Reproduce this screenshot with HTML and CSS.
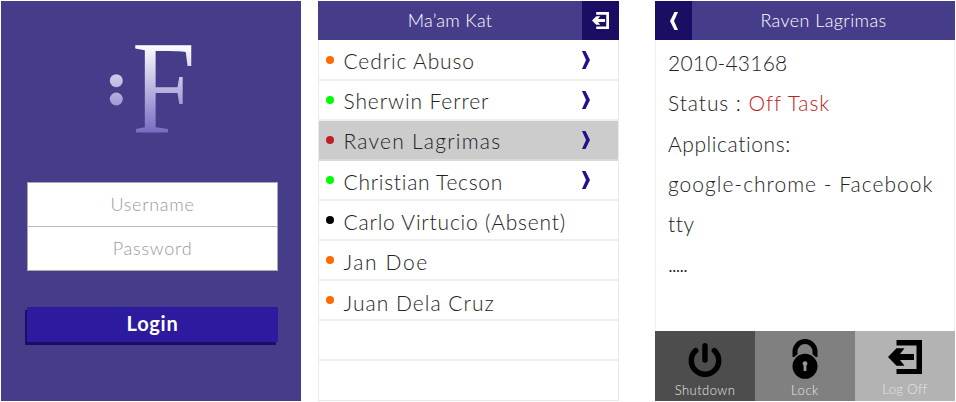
FILE: index.html
```html
<!DOCTYPE html>
<html lang="en">
<head>
<meta charset="utf-8">
<title>Class monitor</title>
<link rel="stylesheet" href="styles.css">
</head>
<body>
<svg class="defs" aria-hidden="true">
  <symbol id="exit" viewBox="0 0 34 34"><path d="M8.500 0H34V34H8.500V29H28.500V5.500H8.500ZM0 17 8.500 8.300H16.500L12 14H26V20H12L16.500 25.700H8.500Z"/></symbol>
  <symbol id="chevron" viewBox="0 0 8 18"><path d="M0 0H3.500L8 9 3.500 18H0L4 9Z"/></symbol>
</svg>

<main class="screens">
  <section class="screen login">
    <svg class="logo" viewBox="0 0 90 96" aria-label="F">
      <defs>
        <linearGradient id="fade" gradientUnits="userSpaceOnUse" x1="0" y1="4" x2="0" y2="94">
          <stop offset="0" stop-color="#fff"/>
          <stop offset="1" stop-color="#7569c0"/>
        </linearGradient>
      </defs>
      <g fill="url(#fade)">
        <circle cx="8.300" cy="40.700" r="6.500"/>
        <circle cx="8.300" cy="59" r="6.500"/>
        <text class="mark" transform="translate(24 0) scale(.85 1)" x="0" y="92.500">F</text>
      </g>
    </svg>
    <form class="form">
      <div class="fields">
        <div class="field user">Username</div>
        <div class="field pass">Password</div>
      </div>
      <div class="submit">Login</div>
    </form>
  </section>

  <section class="screen list">
    <header class="bar">
      <h1 class="title kat">Ma’am Kat</h1>
      <div class="bar-btn"><svg class="exit-small"><use href="#exit"/></svg></div>
    </header>
    <ul class="people">
      <li class="row"><i class="dot orange"></i><span class="name n1">Cedric Abuso</span><svg class="chev"><use href="#chevron"/></svg></li>
      <li class="row"><i class="dot green"></i><span class="name n2">Sherwin Ferrer</span><svg class="chev"><use href="#chevron"/></svg></li>
      <li class="row selected"><i class="dot red"></i><span class="name n3">Raven Lagrimas</span><svg class="chev"><use href="#chevron"/></svg></li>
      <li class="row"><i class="dot green"></i><span class="name n4 low">Christian Tecson</span><svg class="chev"><use href="#chevron"/></svg></li>
      <li class="row"><i class="dot black"></i><span class="name n5 low">Carlo Virtucio (Absent)</span></li>
      <li class="row"><i class="dot orange"></i><span class="name n6 low">Jan Doe</span></li>
      <li class="row"><i class="dot orange"></i><span class="name n7 lower">Juan Dela Cruz</span></li>
      <li class="row"></li>
      <li class="row"></li>
    </ul>
  </section>

  <section class="screen detail">
    <header class="bar">
      <div class="bar-btn"><svg class="chev-back"><use href="#chevron"/></svg></div>
      <h1 class="title raven">Raven Lagrimas</h1>
    </header>
    <div class="info">
      <p class="id">2010-43168</p>
      <p class="status">Status : <span class="off">Off Task</span></p>
      <p class="apps">Applications:</p>
      <p class="chrome">google-chrome - Facebook</p>
      <p class="tty">tty</p>
      <p class="more">.....</p>
    </div>
    <footer class="actions">
      <div class="action shutdown">
        <svg class="icon" viewBox="0 0 40 44"><path d="M10.700 17.500A13.700 13.700 0 1 0 29.300 17.500M20 12.700V27" fill="none" stroke="#000" stroke-width="5.400" stroke-linecap="round"/></svg>
        <span class="label l1">Shutdown</span>
      </div>
      <div class="action lock">
        <svg class="icon" viewBox="0 0 40 44"><path d="M10 24V18.500a10 10 0 0 1 20 0V24" fill="none" stroke="#000" stroke-width="5"/><circle cx="20" cy="33.300" r="13.300" fill="#000" stroke="#808080" stroke-width="1.600"/><path d="M20 28.300a2.300 2.300 0 0 1 1.400 4.200V38H18.600V32.500A2.300 2.300 0 0 1 20 28.300" fill="#999"/></svg>
        <span class="label l2">Lock</span>
      </div>
      <div class="action logoff">
        <svg class="icon" viewBox="0 0 40 44"><use href="#exit" x="3" y="7" width="34" height="34"/></svg>
        <span class="label l3">Log Off</span>
      </div>
    </footer>
  </section>
</main>
</body>
</html>
```
FILE: styles.css
```css
* { box-sizing: border-box; margin: 0; padding: 0; }
body { background: #fff; font-family: Lato, "Open Sans", sans-serif; font-weight: 300; color: #222; overflow: hidden; }
.defs { display: none; }
svg { display: block; }

.screens { display: flex; height: 402px; padding: 1px 0 1px 1px; }
.screen { flex: none; width: 300px; height: 400px; }

/* Login screen */
.login { background: #463d8a; padding: 39px 0 0 26px; }
.logo { width: 90px; height: 96px; margin-left: 81px; overflow: visible; }
.mark { font-family: "Liberation Serif", serif; font-size: 134px; font-weight: 400; }
.form { width: 251px; margin-top: 46px; }
.fields { border: 1px solid #aaa; background: #fff; height: 89px; }
.field { height: 43px; text-align: center; font-size: 18px; line-height: 42px; color: #999; }
.field + .field { height: 44px; border-top: 1px solid #bbb; }
.user { letter-spacing: .7px; }
.pass { letter-spacing: .76px; }
.submit { margin-top: 36px; height: 35px; background: #2c1b9f; box-shadow: -2px 3px 0 #190e63; color: #fff; font-weight: 700; font-size: 20px; line-height: 32px; text-align: center; letter-spacing: .75px; }

/* Header bars */
.bar { height: 39px; display: flex; background: #463d8a; color: #fff; }
.title { flex: 1; text-align: center; font-weight: 300; font-size: 18px; line-height: 38px; }
.kat { letter-spacing: .3px; }
.raven { letter-spacing: .4px; }
.bar-btn { width: 37px; background: #190e63; display: flex; align-items: center; justify-content: center; }
.exit-small { width: 17px; height: 17px; fill: #fff; }
.chev-back { width: 8px; height: 18px; fill: #fff; transform: scaleX(-1); }

/* Roster */
.list { margin-left: 17px; border: 1px solid #e9e9e9; border-top: 0; width: 301px; }
.list .bar { margin: 0 -1px; }
.people { padding-top: 1px; }
.row { display: flex; align-items: center; height: 40px; padding-left: 7px; border-bottom: 2px solid #eee; list-style: none; }
.row.selected { background: #ccc; border-bottom-color: #d9d9d9; }
.row:last-child { border-bottom: 0; height: 39px; }
.dot { width: 8px; height: 8px; border-radius: 50%; margin-right: 9.500px; }
.orange { background: #ff6a00; }
.green { background: #0f0; }
.red { background: #be2026; }
.black { background: #000; }
.name { flex: 1; font-size: 21px; line-height: 38px; padding-top: 1px; white-space: nowrap; }
.low { padding-top: 3px; }
.lower { padding-top: 5px; }
.chev { width: 8px; height: 18px; margin-right: 28px; fill: #22118a; }
.n1 { letter-spacing: .87px; }
.n2 { letter-spacing: .88px; }
.n3 { letter-spacing: 1.23px; }
.n4 { letter-spacing: .72px; }
.n5 { letter-spacing: .79px; }
.n6 { letter-spacing: 1.6px; }
.n7 { letter-spacing: 1.02px; }

/* Student detail */
.detail { display: flex; flex-direction: column; margin-left: 36px; }
.info { flex: 1; padding: 3px 0 0 12px; border: solid #f0f0f0; border-width: 0 1px; font-size: 21px; line-height: 40.300px; white-space: nowrap; }
.id { letter-spacing: .2px; }
.status { letter-spacing: .93px; }
.off { color: #be2026; letter-spacing: .92px; }
.apps { letter-spacing: .58px; }
.chrome { letter-spacing: 1.01px; }
.tty { letter-spacing: .58px; }
.more { letter-spacing: -1.150px; }
.actions { display: grid; grid-template-columns: repeat(3, 100px); height: 70px; }
.action { display: flex; flex-direction: column; align-items: center; padding-top: 2px; color: #e6e6e6; }
.shutdown { background: #4d4d4d; }
.lock { background: #808080; }
.logoff { background: #b3b3b3; }
.icon { width: 40px; height: 44px; overflow: visible; }
.label { font-size: 13px; line-height: 16px; margin-top: 5px; }
.logoff .label { margin-top: 4px; }
.l1 { letter-spacing: .45px; }
.l2 { letter-spacing: .56px; }
.l3 { letter-spacing: .4px; }
```
